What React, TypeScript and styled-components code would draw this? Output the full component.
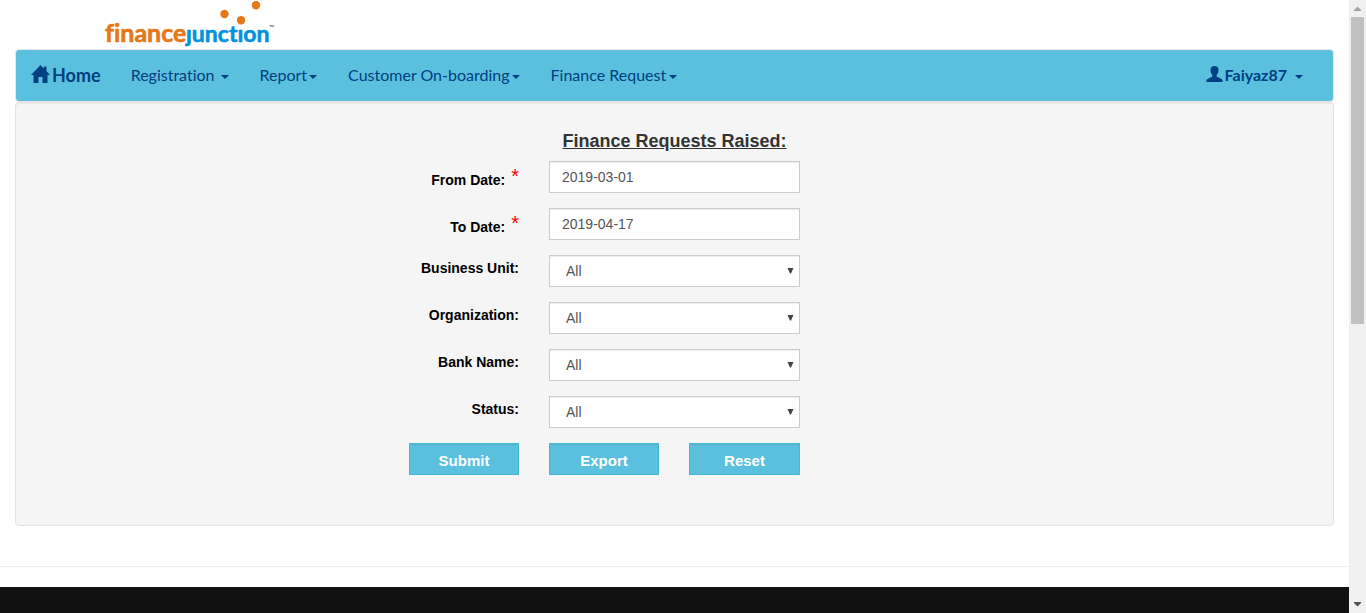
import React from "react";
import styled, { createGlobalStyle } from "styled-components";

const GlobalStyle = createGlobalStyle`
  *, *::before, *::after { box-sizing: border-box; }
  body {
    margin: 0;
    background: #fff;
    color: #333;
    font-family: "Liberation Sans", Arial, sans-serif;
    font-size: 14px;
    line-height: 20px;
  }
`;

const Window = styled.div`
  display: flex;
  height: 100vh;
  overflow: hidden;
`;

const Page = styled.div`
  flex: 1;
  min-width: 0;
  display: flex;
  flex-direction: column;
`;

const Header = styled.header`
  height: 49px;
  flex: none;
  padding-left: 104px;
`;

const LogoArt = styled.svg`
  display: block;
  font-family: Lato, sans-serif;
  font-variant-ligatures: none;
`;

const LogoWord = styled.text<{ $size: number }>`
  font-size: ${(p) => p.$size}px;
  font-weight: 700;
  stroke-width: 0.6;
  stroke-linejoin: round;
`;

const LogoMark = styled.text`
  font-size: 7px;
`;

const Navbar = styled.nav`
  flex: none;
  display: flex;
  align-items: center;
  height: 53px;
  margin: 0 15px;
  padding: 0 30px 2px 15px;
  background: #5bc0de;
  border: 1px solid #e7e7e7;
  border-radius: 4px;
  font-family: Lato, sans-serif;
  font-size: 16px;
  font-variant-ligatures: none;
  color: #004080;
`;

const Brand = styled.a`
  display: flex;
  align-items: center;
  gap: 2px;
  margin-right: 30px;
  color: inherit;
  font-size: 18px;
  font-weight: 700;
  text-decoration: none;
`;

const Menu = styled.ul`
  display: flex;
  gap: 31px;
  flex: 1;
  margin: 0;
  padding: 0;
  list-style: none;
`;

const MenuLink = styled.a<{ $gap: number; $strong?: boolean }>`
  display: flex;
  align-items: center;
  gap: ${(p) => p.$gap}px;
  padding-top: 1px;
  color: inherit;
  font-weight: ${(p) => (p.$strong ? 700 : 400)};
  text-decoration: none;
`;

const UserName = styled.span`
  display: flex;
  align-items: center;
  gap: 2px;
`;

const Caret = styled.span`
  width: 0;
  height: 0;
  margin-top: 4px;
  border-top: 4px solid;
  border-left: 4px solid transparent;
  border-right: 4px solid transparent;
`;

const Panel = styled.main`
  flex: none;
  margin: 0 15px;
  padding: 28px 19px 50px;
  background: #f5f5f5;
  border: 1px solid #e3e3e3;
  border-radius: 4px;
  box-shadow: inset 0 1px 1px rgba(0, 0, 0, 0.05);
`;

const Title = styled.h1`
  margin: 0 0 10px;
  font-size: 18px;
  line-height: 20px;
  font-weight: 700;
  text-align: center;
  text-decoration: underline;
`;

const Form = styled.form`
  display: grid;
  grid-template-columns: 110px 110px 111px 110px;
  column-gap: 30px;
  row-gap: 15px;
  justify-content: center;
`;

const Label = styled.label<{ $required?: boolean }>`
  display: flex;
  justify-content: flex-end;
  gap: 6px;
  grid-column: 1;
  height: 32px;
  padding-top: ${(p) => (p.$required ? 9 : 3)}px;
  color: #000;
  font-weight: 700;
  white-space: nowrap;
`;

const Star = styled.span`
  color: #f00;
  font-size: 20px;
  line-height: 12px;
  font-weight: 400;
`;

const Field = styled.div`
  position: relative;
  grid-column: 2 / 4;
  height: 32px;
`;

const Input = styled.input`
  display: block;
  width: 100%;
  height: 32px;
  padding: 6px 12px;
  border: 1px solid #ccc;
  border-radius: 0;
  background: #fff;
  box-shadow: inset 0 1px 1px rgba(0, 0, 0, 0.075);
  color: #555;
  font: inherit;
`;

const Select = styled.select`
  display: block;
  width: 100%;
  height: 32px;
  padding: 0 16px;
  appearance: none;
  border: 1px solid #ccc;
  border-radius: 0;
  background: #fff;
  box-shadow: inset 0 1px 1px rgba(0, 0, 0, 0.075);
  color: #555;
  font: inherit;
`;

const SelectArrow = styled.svg`
  position: absolute;
  top: 13px;
  right: 6px;
  pointer-events: none;
`;

const Actions = styled.div`
  grid-column: 1 / 4;
  display: grid;
  grid-template-columns: 110px 110px 111px;
  column-gap: 30px;
`;

const Button = styled.button`
  height: 32px;
  padding: 3px 0 0;
  border: 1px solid #46b8da;
  border-radius: 0;
  background: #5bc0de;
  box-shadow: inset 0 1px 1px rgba(0, 0, 0, 0.08);
  color: #fff;
  font: inherit;
  font-size: 15px;
  font-weight: 700;
`;

const Divider = styled.hr`
  flex: none;
  width: 100%;
  height: 1px;
  margin: 40px 0 20px;
  border: 0;
  background: #eee;
`;

const Footer = styled.footer`
  flex: 1;
  background: #111;
`;

const Scrollbar = styled.div`
  flex: none;
  display: flex;
  flex-direction: column;
  align-items: center;
  width: 17px;
  background: #f0f0f0;
`;

const ScrollArrow = styled.svg`
  flex: none;
  display: block;
`;

const ScrollTrack = styled.div`
  flex: 1;
  width: 13px;
`;

const ScrollThumb = styled.div`
  height: 53%;
  background: #c1c1c1;
`;

function Logo() {
  return (
    <LogoArt width="180" height="49" viewBox="0 0 180 49" role="img" aria-label="Finance Junction">
      <LogoWord $size={25} x="1" y="42" fill="#e67817" stroke="#e67817">finance</LogoWord>
      <LogoWord $size={23} x="82" y="42" fill="#0093dd" stroke="#0093dd">ȷunctıon</LogoWord>
      <LogoMark x="165" y="30" fill="#444">™</LogoMark>
      <circle cx="120.500" cy="14" r="4.200" fill="#e67817" />
      <circle cx="137" cy="20.300" r="4.200" fill="#e67817" />
      <circle cx="152" cy="5.300" r="4.200" fill="#e67817" />
    </LogoArt>
  );
}

const menus = [
  { name: "Registration", gap: 6 },
  { name: "Report", gap: 2 },
  { name: "Customer On-boarding", gap: 2 },
  { name: "Finance Request", gap: 3 },
];

const dates = [
  { id: "from", label: "From Date:", value: "2019-03-01" },
  { id: "to", label: "To Date:", value: "2019-04-17" },
];

const filters = [
  { id: "unit", label: "Business Unit:" },
  { id: "organization", label: "Organization:" },
  { id: "bank", label: "Bank Name:" },
  { id: "status", label: "Status:" },
];

export default function App() {
  return (
    <Window>
      <GlobalStyle />
      <Page>
        <Header>
          <Logo />
        </Header>
        <Navbar>
          <Brand href="#home">
            <svg width="19" height="20" viewBox="0 0 19 20" fill="currentColor" aria-hidden="true">
              <path d="M9.500 0 L13 3.600 V1.500 H15.500 V6.200 L19 10 H16.500 V18 H11.500 V12 H7.500 V18 H2.500 V10 H0 Z" />
            </svg>
            Home
          </Brand>
          <Menu>
            {menus.map((m) => (
              <li key={m.name}>
                <MenuLink href="#menu" $gap={m.gap}>
                  {m.name}
                  <Caret />
                </MenuLink>
              </li>
            ))}
          </Menu>
          <MenuLink href="#user" $gap={8} $strong>
            <UserName>
              <svg width="17" height="18" viewBox="0 0 17 18" fill="currentColor" aria-hidden="true">
                <path d="M8.500 0 C11 0 12.500 1.600 12.500 4 C12.500 6.400 11.700 8 10.600 9 V10.600 L15.600 13 Q16.600 13.600 16.600 14.600 V16 H.4 V14.600 Q.4 13.600 1.400 13 L6.400 10.600 V9 C5.300 8 4.500 6.400 4.500 4 C4.500 1.600 6 0 8.500 0 Z" />
              </svg>
              Faiyaz87
            </UserName>
            <Caret />
          </MenuLink>
        </Navbar>
        <Panel>
          <Title>Finance Requests Raised:</Title>
          <Form onSubmit={(e) => e.preventDefault()}>
            {dates.map((d) => (
              <React.Fragment key={d.id}>
                <Label htmlFor={d.id} $required>
                  {d.label}
                  <Star>*</Star>
                </Label>
                <Field>
                  <Input id={d.id} type="text" defaultValue={d.value} />
                </Field>
              </React.Fragment>
            ))}
            {filters.map((f) => (
              <React.Fragment key={f.id}>
                <Label htmlFor={f.id}>{f.label}</Label>
                <Field>
                  <Select id={f.id}>
                    <option>All</option>
                  </Select>
                  <SelectArrow width="7" height="6" viewBox="0 0 7 6" fill="#444" aria-hidden="true">
                    <path d="M.5 0 H6.500 L4 5.500 H3 Z" />
                  </SelectArrow>
                </Field>
              </React.Fragment>
            ))}
            <Actions>
              <Button type="submit">Submit</Button>
              <Button type="button">Export</Button>
              <Button type="reset">Reset</Button>
            </Actions>
          </Form>
        </Panel>
        <Divider />
        <Footer />
      </Page>
      <Scrollbar aria-hidden="true">
        <ScrollArrow width="17" height="17" viewBox="0 0 17 17" fill="#a3a3a3">
          <path d="M5 11 H12 V10 L8.500 6.500 L5 10 Z" />
        </ScrollArrow>
        <ScrollTrack>
          <ScrollThumb />
        </ScrollTrack>
        <ScrollArrow width="17" height="17" viewBox="0 0 17 17" fill="#505050">
          <path d="M5 6 H12 V7 L8.500 10.500 L5 7 Z" />
        </ScrollArrow>
      </Scrollbar>
    </Window>
  );
}
